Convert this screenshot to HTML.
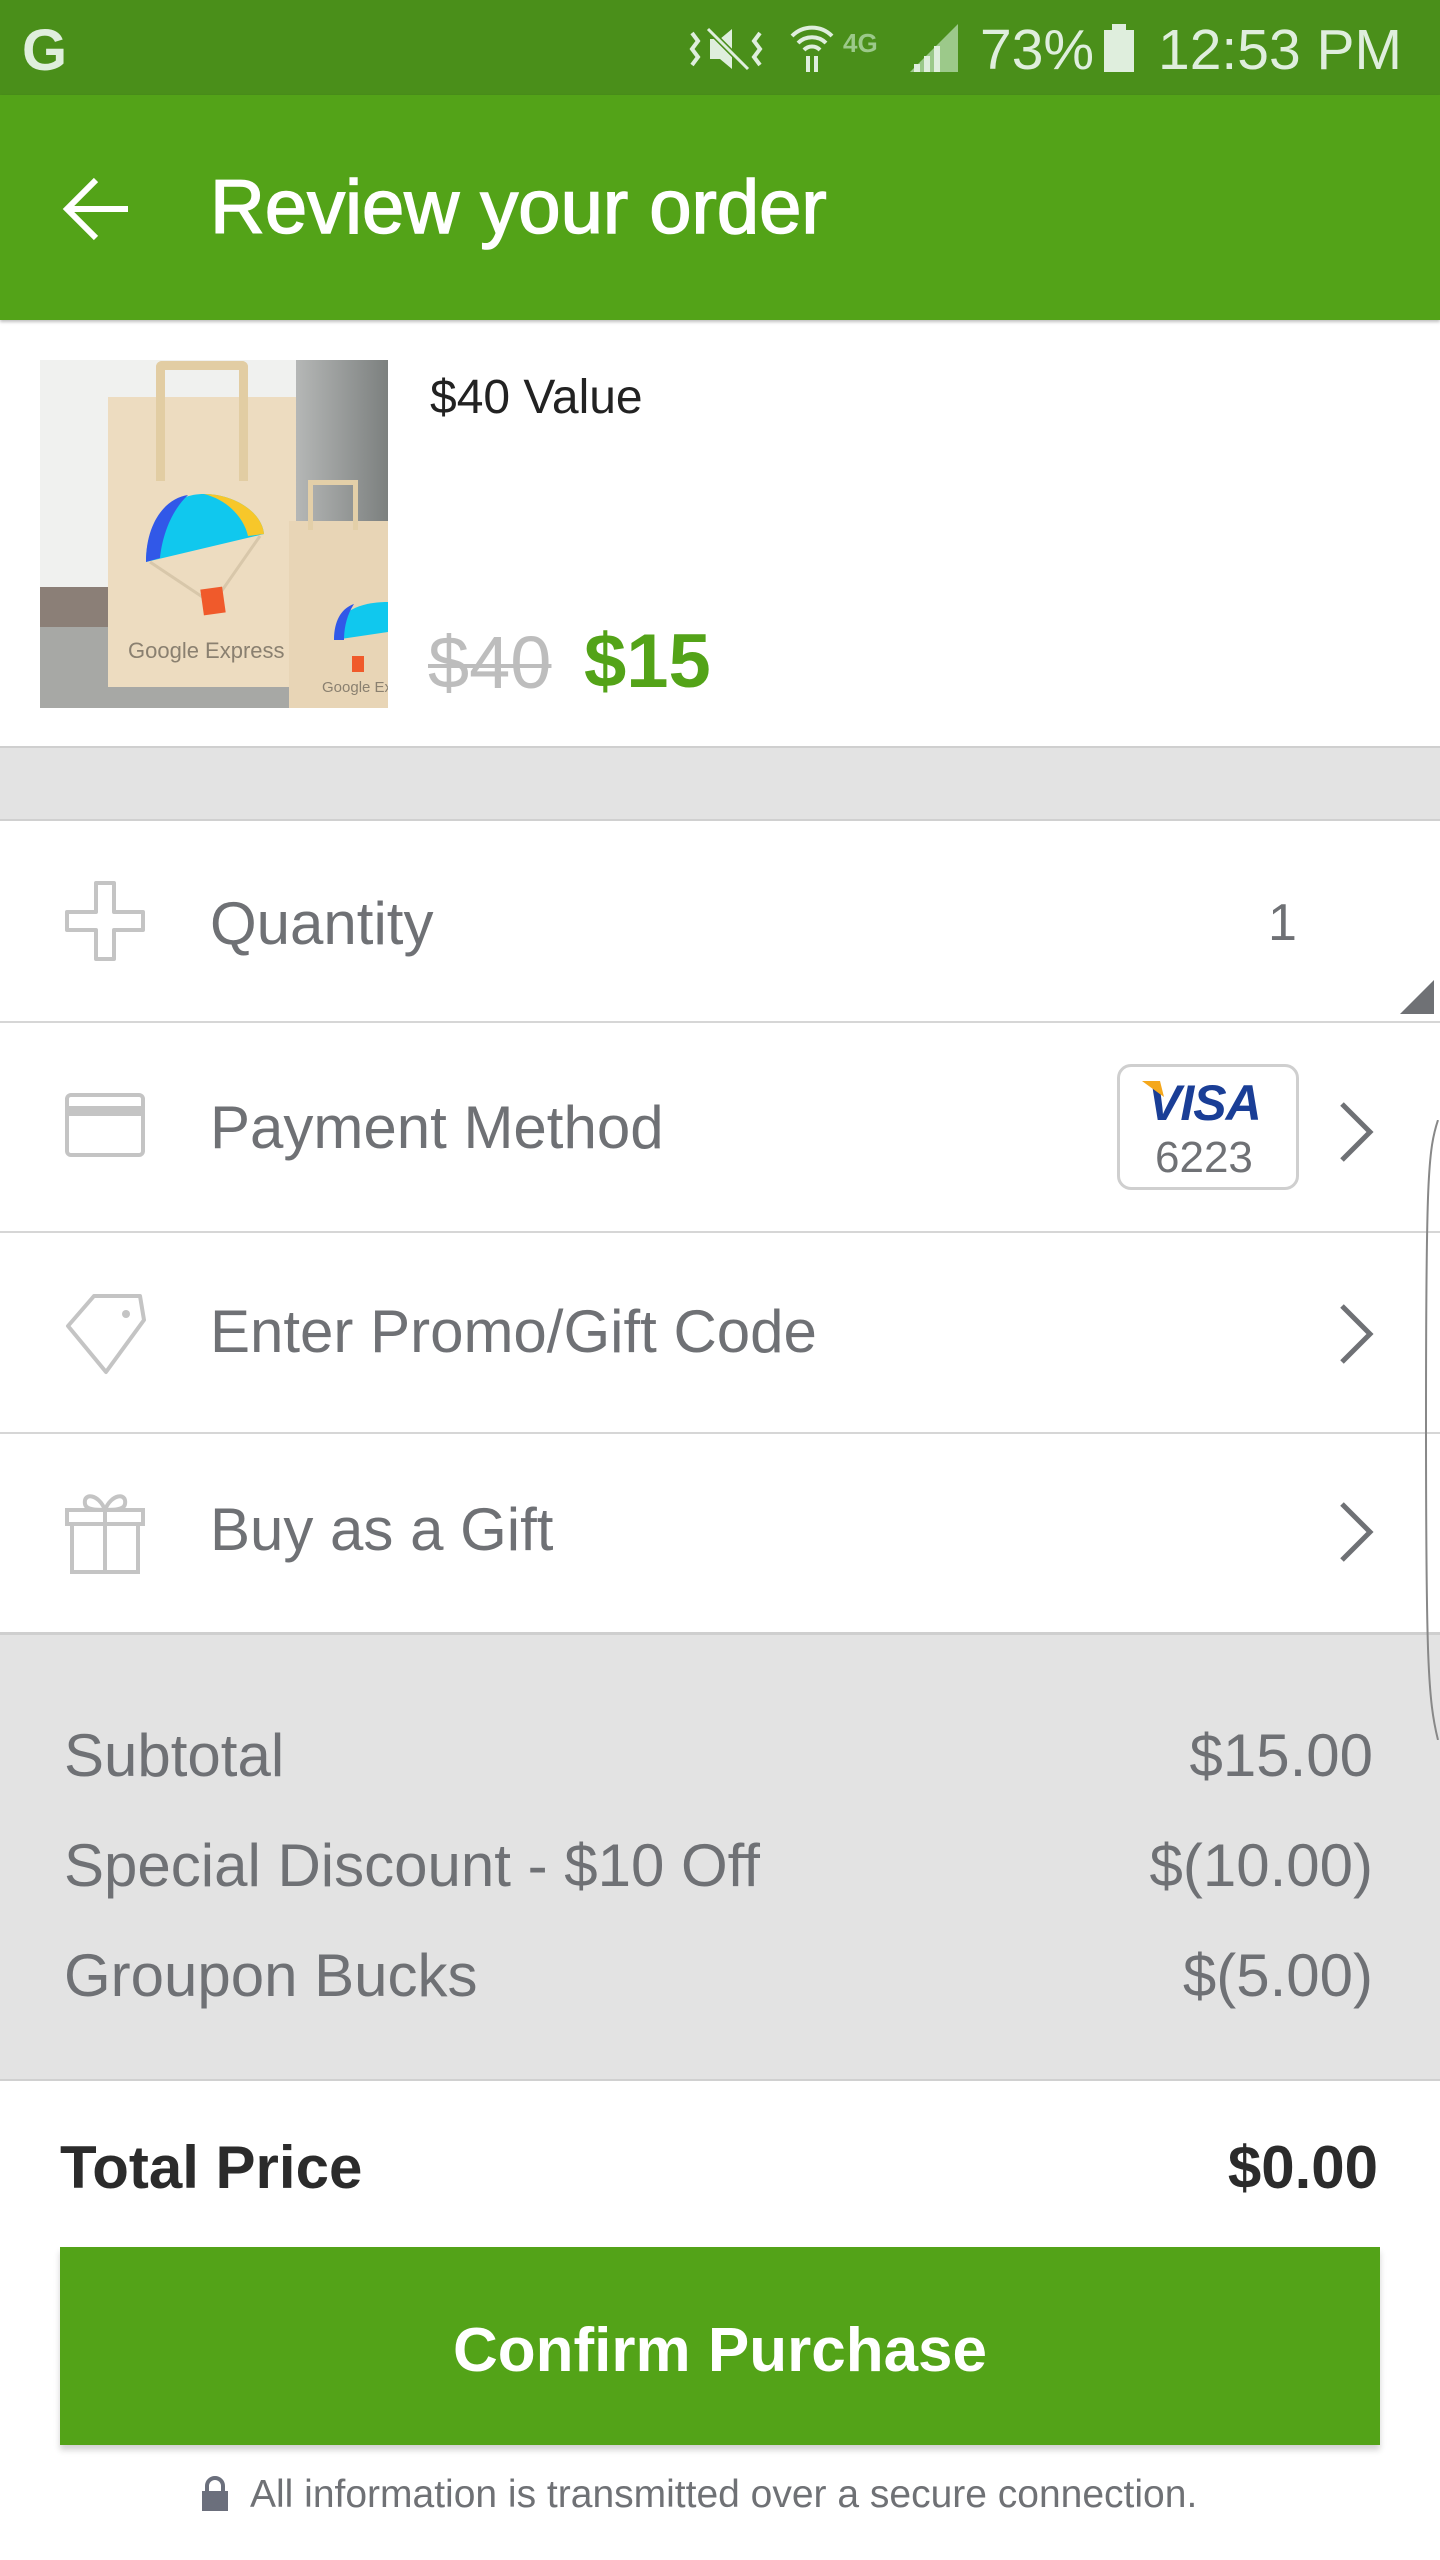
<!DOCTYPE html>
<html><head><meta charset="utf-8"><style>
*{margin:0;padding:0;box-sizing:border-box}
body{width:1440px;height:2560px;overflow:hidden;background:#fff;font-family:"Liberation Sans",Arial,sans-serif;position:relative}
.abs{position:absolute}
.t{position:absolute;white-space:nowrap;line-height:1}
.lbl{color:#6f7175;font-size:60px}
.sep{position:absolute;left:0;width:1440px;height:2px;background:#d6d6d6}
.chev{position:absolute;left:1336px}
</style></head><body>
<!-- status bar -->
<div class="abs" style="left:0;top:0;width:1440px;height:95px;background:#4a8f1a"></div>
<div class="t" style="left:22px;top:22px;font-size:58px;font-weight:bold;color:#dfeedd">G</div>
<svg class="abs" style="left:688px;top:25px" width="80" height="50" viewBox="0 0 80 50"><g stroke="#dfeedd" stroke-width="4" fill="none"><path d="M4 8l6 8-6 8 6 8-6 8M72 8l-6 8 6 8-6 8 6 8"/></g><path d="M22 14h10l12-10v40l-12-10h-10z" fill="#dfeedd"/><path d="M20 4l40 40" stroke="#4a8f1a" stroke-width="6"/><path d="M20 4l40 40" stroke="#dfeedd" stroke-width="3"/></svg>
<svg class="abs" style="left:788px;top:22px" width="50" height="52" viewBox="0 0 50 52"><g stroke="#dfeedd" stroke-width="4" fill="none"><path d="M4 14a28 28 0 0 1 40 0M10 21a20 20 0 0 1 28 0M16 28a11 11 0 0 1 16 0"/><path d="M20 34v16M28 34v16"/></g></svg>
<div class="t" style="left:843px;top:30px;font-size:26px;font-weight:bold;color:#9cc98a">4G</div>
<svg class="abs" style="left:910px;top:22px" width="52" height="52" viewBox="0 0 52 52"><path d="M0 50L48 2V50Z" fill="#9cc98a"/><path d="M4 50h6v-8h-6zM14 50h6v-16h-6zM24 50h6v-26h-6z" fill="#dfeedd"/></svg>
<div class="t" style="left:980px;top:22px;font-size:57px;color:#dfeedd">73%</div>
<div class="abs" style="left:1104px;top:30px;width:30px;height:42px;background:#dfeedd"></div>
<div class="abs" style="left:1112px;top:24px;width:14px;height:8px;background:#dfeedd"></div>
<div class="t" style="left:1158px;top:22px;font-size:57px;color:#dfeedd">12:53 PM</div>
<!-- app bar -->
<div class="abs" style="left:0;top:95px;width:1440px;height:225px;background:#53a318;box-shadow:0 2px 3px rgba(0,0,0,.25)"></div>
<svg class="abs" style="left:62px;top:176px" width="70" height="66" viewBox="0 0 70 66"><path d="M66 33H6M34 4L5 33l29 29" stroke="#fff" stroke-width="6" fill="none"/></svg>
<div class="t" style="left:210px;top:170px;font-size:76px;color:#fff;-webkit-text-stroke:1.5px #fff">Review your order</div>
<!-- product -->
<div class="abs" style="left:40px;top:360px;width:348px;height:348px;background:#f0f1ef;overflow:hidden">
 <div class="abs" style="left:256px;top:0;width:92px;height:240px;background:linear-gradient(90deg,#b5b7b6,#7c807f)"></div>
 <div class="abs" style="left:0;top:227px;width:348px;height:40px;background:#8b7f77"></div>
 <div class="abs" style="left:0;top:267px;width:348px;height:81px;background:#a7a8a5"></div>
 <div class="abs" style="left:68px;top:37px;width:188px;height:290px;background:#eddcc0"></div>
 <div class="abs" style="left:116px;top:1px;width:92px;height:120px;border:9px solid #e2cda3;border-bottom:none;border-radius:6px 6px 0 0"></div>
 <svg class="abs" style="left:104px;top:132px" width="122" height="126" viewBox="0 0 122 126"><path d="M2 70C2 24 30 2 60 2c30 0 58 18 60 40z" fill="#10c8ee"/><path d="M2 70C2 30 22 6 44 3 26 20 18 46 16 66z" fill="#3158e8"/><path d="M60 2c30 0 58 18 60 40l-16 2C100 26 84 8 60 2z" fill="#f7c72a"/><path d="M6 70l60 40M116 44L70 110" stroke="#d8c7aa" stroke-width="3"/><rect x="58" y="96" width="22" height="26" fill="#f05a2b" transform="rotate(-8 69 109)"/></svg>
 <div class="t" style="left:88px;top:280px;font-size:22px;color:#8a8070">Google Express</div>
 <div class="abs" style="left:249px;top:161px;width:99px;height:187px;background:#e8d5b6"></div>
 <div class="abs" style="left:268px;top:120px;width:50px;height:50px;border:5px solid #e3cfa8;border-bottom:none"></div>
 <svg class="abs" style="left:292px;top:240px" width="56" height="80" viewBox="0 0 56 80"><path d="M2 40C2 14 24 2 56 2v30z" fill="#10c8ee"/><path d="M2 40C2 20 10 8 22 4 14 16 12 30 12 40z" fill="#3158e8"/><rect x="20" y="56" width="12" height="16" fill="#f05a2b"/></svg>
 <div class="t" style="left:282px;top:320px;font-size:15px;color:#8a8070">Google Ex</div>
</div>
<div class="t" style="left:430px;top:374px;font-size:48px;color:#222">$40 Value</div>
<div class="t" style="left:428px;top:626px;font-size:74px;color:#bdbdbd;text-decoration:line-through;text-decoration-thickness:4px">$40</div>
<div class="t" style="left:584px;top:624px;font-size:76px;color:#53a318;font-weight:bold">$15</div>
<!-- gray gap -->
<div class="abs" style="left:0;top:746px;width:1440px;height:75px;background:#e3e3e3;border-top:2px solid #cfcfcf;border-bottom:2px solid #d0d0d0"></div>
<!-- rows -->
<svg class="abs" style="left:64px;top:880px" width="82" height="82" viewBox="0 0 82 82"><path d="M32 3h18v29h29v18H50v29H32V50H3V32h29z" fill="none" stroke="#c4c4c4" stroke-width="4" stroke-linejoin="round"/></svg>
<div class="t lbl" style="left:210px;top:894px">Quantity</div>
<div class="t lbl" style="left:1268px;top:897px;font-size:52px">1</div>
<svg class="abs" style="left:1400px;top:980px" width="34" height="34"><path d="M34 0V34H0z" fill="#6f7175"/></svg>
<div class="sep" style="top:1021px"></div>
<svg class="abs" style="left:64px;top:1092px" width="82" height="66" viewBox="0 0 82 66"><rect x="3" y="3" width="76" height="60" rx="4" fill="none" stroke="#c4c4c4" stroke-width="4"/><rect x="3" y="14" width="76" height="10" fill="#c4c4c4"/></svg>
<div class="t lbl" style="left:210px;top:1098px">Payment Method</div>
<div class="abs" style="left:1117px;top:1064px;width:182px;height:126px;border:3px solid #cfcfcf;border-radius:14px;background:#fff"></div>
<div class="t" style="left:1148px;top:1078px;font-size:50px;font-weight:bold;font-style:italic;color:#1a3e96;letter-spacing:-1px">VISA</div>
<svg class="abs" style="left:1142px;top:1081px" width="22" height="18"><path d="M0 0h18l4 16z" fill="#f5a81c"/></svg>
<div class="t" style="left:1155px;top:1136px;font-size:44px;color:#6f7175">6223</div>
<svg class="chev" style="top:1100px" width="40" height="64" viewBox="0 0 40 64"><path d="M6 4l28 28-28 28" fill="none" stroke="#6f7175" stroke-width="5"/></svg>
<div class="sep" style="top:1231px"></div>
<svg class="abs" style="left:64px;top:1290px" width="84" height="86" viewBox="0 0 84 86"><path d="M42 82L4 36 30 6h46l4 24z" fill="none" stroke="#c4c4c4" stroke-width="4" stroke-linejoin="round"/><circle cx="62" cy="24" r="4" fill="#c4c4c4"/></svg>
<div class="t lbl" style="left:210px;top:1302px">Enter Promo/Gift Code</div>
<svg class="chev" style="top:1302px" width="40" height="64" viewBox="0 0 40 64"><path d="M6 4l28 28-28 28" fill="none" stroke="#6f7175" stroke-width="5"/></svg>
<div class="sep" style="top:1432px"></div>
<svg class="abs" style="left:64px;top:1488px" width="82" height="88" viewBox="0 0 82 88"><g fill="none" stroke="#c4c4c4" stroke-width="4"><rect x="3" y="22" width="76" height="14"/><rect x="8" y="36" width="66" height="48"/><path d="M41 22v62M41 22c-6-16-22-18-20-6 1 6 12 6 20 6M41 22c6-16 22-18 20-6-1 6-12 6-20 6"/></g></svg>
<div class="t lbl" style="left:210px;top:1500px">Buy as a Gift</div>
<svg class="chev" style="top:1500px" width="40" height="64" viewBox="0 0 40 64"><path d="M6 4l28 28-28 28" fill="none" stroke="#6f7175" stroke-width="5"/></svg>
<!-- summary -->
<div class="abs" style="left:0;top:1632px;width:1440px;height:449px;background:#e3e3e3;border-top:3px solid #cfcfcf;border-bottom:2px solid #d0d0d0"></div>
<div class="t lbl" style="left:64px;top:1726px">Subtotal</div>
<div class="t lbl" style="right:67px;top:1726px">$15.00</div>
<div class="t lbl" style="left:64px;top:1836px">Special Discount - $10 Off</div>
<div class="t lbl" style="right:67px;top:1836px">$(10.00)</div>
<div class="t lbl" style="left:64px;top:1946px">Groupon Bucks</div>
<div class="t lbl" style="right:67px;top:1946px">$(5.00)</div>
<svg class="abs" style="left:1420px;top:1120px" width="20" height="620"><path d="M18 0C8 30 6 60 6 300s2 280 12 320" fill="none" stroke="#888" stroke-width="2"/></svg>
<!-- total -->
<div class="t" style="left:60px;top:2138px;font-size:60px;font-weight:bold;color:#2b2b2b">Total Price</div>
<div class="t" style="right:62px;top:2138px;font-size:60px;font-weight:bold;color:#2b2b2b">$0.00</div>
<div class="abs" style="left:60px;top:2247px;width:1320px;height:198px;background:#53a318;box-shadow:0 5px 6px rgba(0,0,0,.18)"></div>
<div class="t" style="left:60px;width:1320px;text-align:center;top:2320px;font-size:62px;font-weight:bold;color:#fff">Confirm Purchase</div>
<svg class="abs" style="left:200px;top:2476px" width="30" height="36" viewBox="0 0 30 36"><path d="M7 16V10a8 8 0 0 1 16 0v6" fill="none" stroke="#6b6f7c" stroke-width="4"/><rect x="2" y="15" width="26" height="20" fill="#6b6f7c"/></svg>
<div class="t" style="left:250px;top:2475px;font-size:39px;color:#6f7175">All information is transmitted over a secure connection.</div>
</body></html>
